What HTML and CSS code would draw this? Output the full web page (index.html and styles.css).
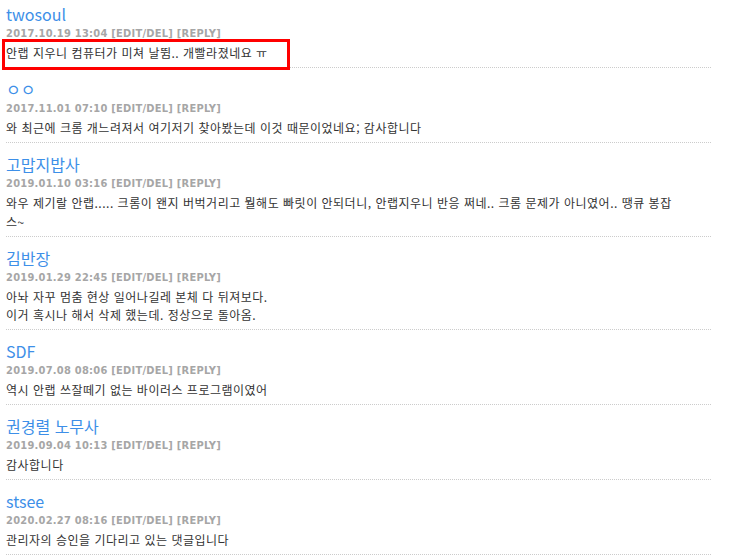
FILE: index.html
```html
<!DOCTYPE html>
<html lang="ko">
<head>
    <meta charset="UTF-8">
    <meta name="viewport" content="width=device-width, initial-scale=1.0">
    <title>댓글</title>
    <link rel="stylesheet" href="styles.css">
</head>
<body>
    <div class="comments">
        <div class="comment">
            <a class="name" href="#">twosoul</a>
            <div class="meta">2017.10.19 13:04 <a href="#">[EDIT/DEL]</a> <a href="#">[REPLY]</a></div>
            <p class="text">안랩 지우니 컴퓨터가 미쳐 날뜀.. 개빨라졌네요 ㅠ</p>
        </div>

        <div class="comment">
            <a class="name" href="#">ㅇㅇ</a>
            <div class="meta">2017.11.01 07:10 <a href="#">[EDIT/DEL]</a> <a href="#">[REPLY]</a></div>
            <p class="text">와 최근에 크롬 개느려져서 여기저기 찾아봤는데 이것 때문이었네요; 감사합니다</p>
        </div>

        <div class="comment">
            <a class="name" href="#">고맙지밥사</a>
            <div class="meta">2019.01.10 03:16 <a href="#">[EDIT/DEL]</a> <a href="#">[REPLY]</a></div>
            <p class="text">와우 제기랄 안랩..... 크롬이 왠지 버벅거리고 뭘해도 빠릿이 안되더니, 안랩지우니 반응 쩌네.. 크롬 문제가 아니였어.. 땡큐 봉잡스~</p>
        </div>

        <div class="comment">
            <a class="name" href="#">김반장</a>
            <div class="meta">2019.01.29 22:45 <a href="#">[EDIT/DEL]</a> <a href="#">[REPLY]</a></div>
            <p class="text">아놔 자꾸 멈춤 현상 일어나길레 본체 다 뒤져보다.<br>이거 혹시나 해서 삭제 했는데. 정상으로 돌아옴.</p>
        </div>

        <div class="comment">
            <a class="name" href="#">SDF</a>
            <div class="meta">2019.07.08 08:06 <a href="#">[EDIT/DEL]</a> <a href="#">[REPLY]</a></div>
            <p class="text">역시 안랩 쓰잘떼기 없는 바이러스 프로그램이였어</p>
        </div>

        <div class="comment">
            <a class="name" href="#">권경렬 노무사</a>
            <div class="meta">2019.09.04 10:13 <a href="#">[EDIT/DEL]</a> <a href="#">[REPLY]</a></div>
            <p class="text">감사합니다</p>
        </div>

        <div class="comment">
            <a class="name" href="#">stsee</a>
            <div class="meta">2020.02.27 08:16 <a href="#">[EDIT/DEL]</a> <a href="#">[REPLY]</a></div>
            <p class="text">관리자의 승인을 기다리고 있는 댓글입니다</p>
        </div>
    </div>

    <div class="highlight"></div>
</body>
</html>
```

FILE: styles.css
```css
* {
    margin: 0;
    padding: 0;
    box-sizing: border-box;
}

body {
    font-family: "Noto Sans CJK KR", "Noto Sans", sans-serif;
    background: #fff;
    color: #333;
    padding: 0 27px 0 6px;
}

a {
    text-decoration: none;
}

.comments {
    width: 705px;
}

.comment {
    padding: 10px 0 4.5px;
    border-bottom: 1px dotted #ccc;
}

.comment:first-child {
    padding-top: 3px;
}

.name {
    display: block;
    color: #3d8fe8;
    font-size: 16px;
    line-height: 23px;
}

.meta {
    font-family: "DejaVu Sans Condensed", "DejaVu Sans", Verdana, sans-serif;
    font-size: 11px;
    font-weight: bold;
    line-height: 16px;
    letter-spacing: 0.25px;
    color: #a6a6a6;
}

.meta a {
    color: #a6a6a6;
}

.text {
    max-width: 670px;
    margin-top: 2px;
    font-size: 12px;
    line-height: 18.5px;
    letter-spacing: 0.5px;
    color: #333;
}

/* red annotation box over the first comment */
.highlight {
    position: absolute;
    left: 2px;
    top: 39px;
    width: 288px;
    height: 31px;
    border: 3px solid #f00;
}
```
